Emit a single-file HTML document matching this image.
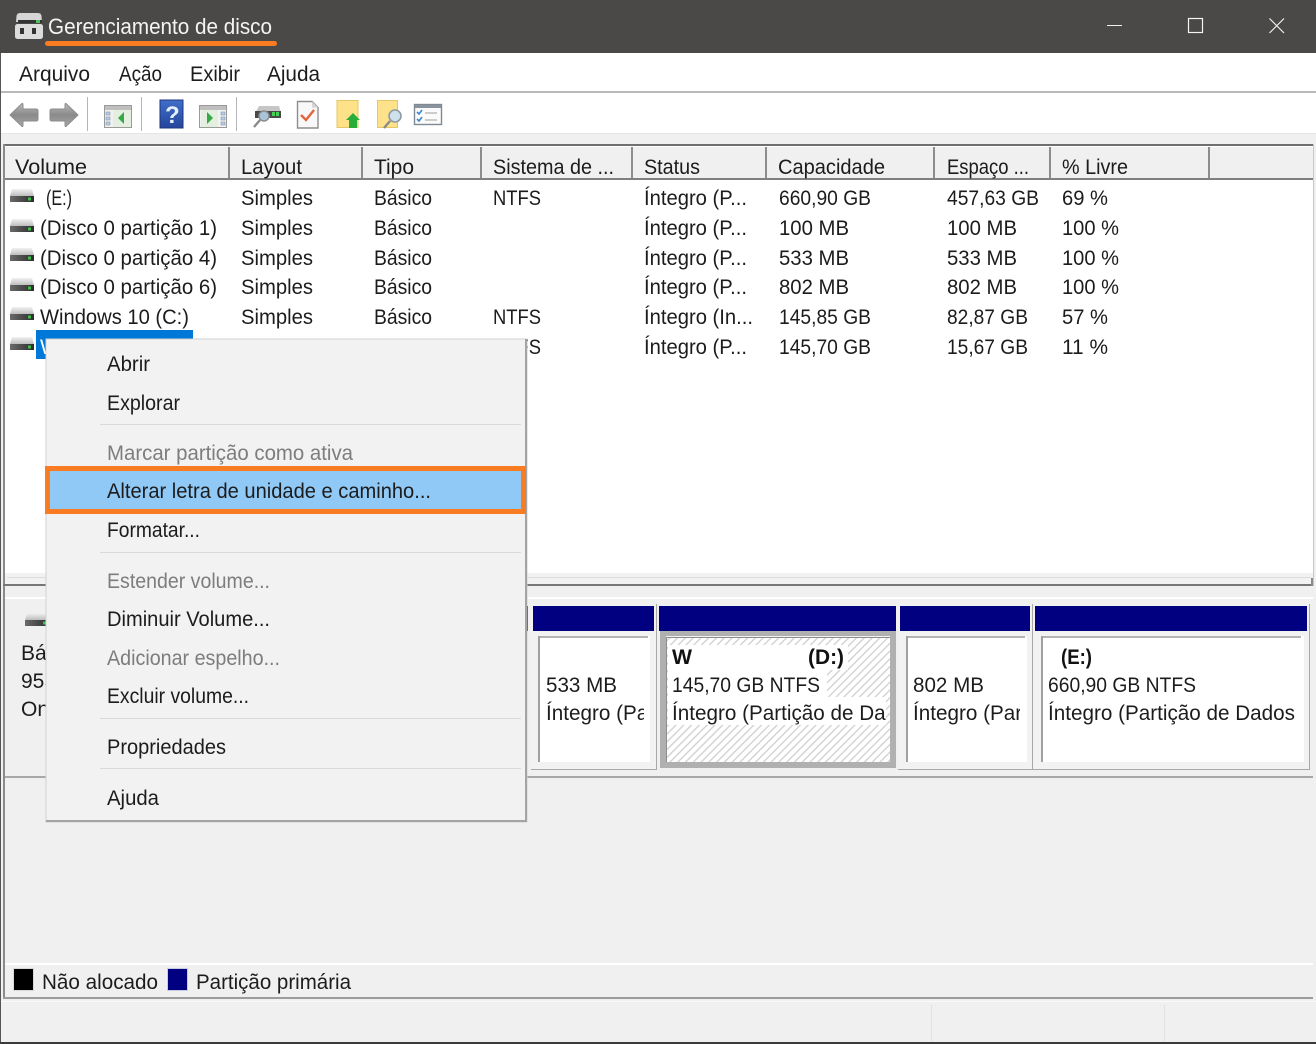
<!DOCTYPE html>
<html lang="pt"><head><meta charset="utf-8"><title>Gerenciamento de disco</title>
<style>
html,body{margin:0;padding:0;background:#f0f0f0}
svg{display:block;filter:blur(.3px)}
text{font-family:"Liberation Sans",sans-serif;font-size:21px;fill:#1c1c1c;white-space:pre}
.d{fill:#7d7d7d}
.b{font-weight:bold;fill:#111}
</style></head><body>
<svg xmlns="http://www.w3.org/2000/svg" width="1316" height="1044" viewBox="0 0 1316 1044">
<defs>
<linearGradient id="gt" x1="0" y1="0" x2="0" y2="1"><stop offset="0" stop-color="#f2f2f2"/><stop offset="1" stop-color="#bdbdbd"/></linearGradient>
<linearGradient id="gd" x1="0" y1="0" x2="1" y2="0"><stop offset="0" stop-color="#6a6a6a"/><stop offset="1" stop-color="#2d2d2d"/></linearGradient>
<linearGradient id="ga" x1="0" y1="0" x2="0" y2="1"><stop offset="0" stop-color="#b8b8b8"/><stop offset=".5" stop-color="#8a8a8a"/><stop offset="1" stop-color="#a8a8a8"/></linearGradient>
<linearGradient id="gh" x1="0" y1="0" x2="0" y2="1"><stop offset="0" stop-color="#3f6fc8"/><stop offset="1" stop-color="#24459c"/></linearGradient>
<pattern id="hatch" width="5.5" height="5.5" patternUnits="userSpaceOnUse" patternTransform="rotate(45)"><rect width="5.5" height="5.5" fill="#fff"/><rect width="1.3" height="5.5" fill="#cfcfcf"/></pattern>
<clipPath id="c1"><rect x="540" y="695" width="104" height="35"/></clipPath>
<clipPath id="c2"><rect x="668" y="695" width="218" height="35"/></clipPath>
<clipPath id="c3"><rect x="908" y="695" width="112" height="35"/></clipPath>
<g id="hd">
<path d="M2 0H22L24 7H0Z" fill="url(#gt)"/>
<rect x="0" y="7" width="24" height="6" fill="url(#gd)"/>
<rect x="18" y="8.500" width="3" height="3" fill="#3cc04a"/>
</g>
<g id="win">
<rect x="0.500" y="0.500" width="27" height="22" fill="#f2f2f2" stroke="#9a9a9a"/>
<rect x="1" y="1" width="26" height="4" fill="#bfbfbf"/>
</g>
<g id="sq" fill="#b9cde4" stroke="#7f93aa" stroke-width=".6">
<rect x="0" y="0" width="4" height="3"/><rect x="0" y="5" width="4" height="3"/><rect x="0" y="10" width="4" height="3"/>
</g>
</defs>

<!-- base -->
<rect width="1316" height="1044" fill="#f0f0f0"/>

<!-- title bar -->
<rect width="1316" height="53" fill="#4a4947"/>
<path d="M20 13H38Q41 13 41.500 16L42 22H16L16.500 16Q17 13 20 13Z" fill="#d6d6d6"/>
<rect x="18" y="20" width="24" height="3" fill="#333"/><rect x="36" y="20" width="4" height="3" fill="#4fc05a"/>
<rect x="15" y="24" width="28" height="15" rx="2.500" fill="#dcdcdc"/>
<rect x="20" y="28" width="4" height="6" fill="#333"/><rect x="32" y="28" width="4" height="6" fill="#333"/>
<text x="48" y="34" textLength="224" lengthAdjust="spacingAndGlyphs" style="fill:#f4f4f4;font-size:22px">Gerenciamento de disco</text>
<rect x="45" y="41" width="232" height="5" rx="2.500" fill="#f97c22"/>
<rect x="1107" y="25" width="15" height="1" fill="#f0f0f0"/>
<rect x="1188.500" y="18.500" width="14" height="14" fill="none" stroke="#f4f4f4" stroke-width="1.200"/>
<path d="M1269.500 18.500L1284 33M1284 18.500L1269.500 33" stroke="#f0f0f0" stroke-width="1.200" fill="none"/>

<!-- menu -->
<rect y="53" width="1316" height="39" fill="#fff"/>
<text x="19" y="81" textLength="71" lengthAdjust="spacingAndGlyphs">Arquivo</text>
<text x="119" y="81" textLength="43" lengthAdjust="spacingAndGlyphs">Ação</text>
<text x="190" y="81" textLength="50" lengthAdjust="spacingAndGlyphs">Exibir</text>
<text x="267" y="81" textLength="53" lengthAdjust="spacingAndGlyphs">Ajuda</text>
<rect y="91" width="1316" height="2" fill="#b9b9b9"/>

<!-- toolbar -->
<rect y="93" width="1316" height="40" fill="#fff"/>
<rect y="133" width="1316" height="1" fill="#e6e6e6"/>
<path d="M10 115L22 103.500Q23 103 23 105V109H36Q38 109 38 111V119Q38 121 36 121H23V125Q23 127 22 126.500Z" fill="url(#ga)" stroke="#8c8c8c"/>
<path d="M78 115L66 103.500Q65 103 65 105V109H52Q50 109 50 111V119Q50 121 52 121H65V125Q65 127 66 126.500Z" fill="url(#ga)" stroke="#8c8c8c"/>
<rect x="87" y="97" width="1" height="34" fill="#b5b5b5"/>
<rect x="141" y="97" width="1" height="34" fill="#b5b5b5"/>
<rect x="236" y="97" width="1" height="34" fill="#b5b5b5"/>
<use href="#win" x="104" y="105"/>
<use href="#sq" x="106" y="112"/>
<rect x="113" y="110" width="18" height="17" fill="#e4efe0"/>
<path d="M124 112V124L118 118Z" fill="#35a84a"/>
<rect x="160" y="100" width="23" height="28" fill="url(#gh)" stroke="#1f357f"/>
<text x="165" y="123" style="fill:#e6eefb;font-size:24px;font-weight:bold">?</text>
<use href="#win" x="199" y="105"/>
<use href="#sq" x="221" y="112"/>
<rect x="201" y="110" width="17" height="17" fill="#e4efe0"/>
<path d="M207 112V124L213 118Z" fill="#35a84a"/>
<!-- disk + magnifier -->
<path d="M259 106H279L281 113H255Z" fill="#c6c6c6"/>
<rect x="255" y="111" width="26" height="7" fill="#4a4a4a"/>
<rect x="272" y="112" width="3" height="4" fill="#44d050"/><rect x="276" y="112" width="3" height="4" fill="#44d050"/>
<circle cx="264" cy="116" r="5" fill="#a9c5dc" stroke="#8a8a8a" stroke-width="1.400"/>
<path d="M260 120L254 127" stroke="#8a8a8a" stroke-width="2.400"/>
<!-- doc check -->
<path d="M297.500 101.500H312L318 107.500V128H297.500Z" fill="#f8f8f8" stroke="#8e8e8e" stroke-width="1.400"/>
<path d="M312 101.500V107.500H318Z" fill="#d4d4d4"/>
<path d="M301 115L306 120L314 110" fill="none" stroke="#e2643a" stroke-width="2.400"/>
<!-- folder up -->
<rect x="337" y="100.500" width="21" height="27" fill="#fde28a" stroke="#e6c766"/>
<path d="M353 113L360 120H357V128H349V120H346Z" fill="#27ae38"/>
<!-- folder search -->
<rect x="377.500" y="100.500" width="20" height="27" fill="#fde28a" stroke="#e6c766"/>
<circle cx="395" cy="116" r="6" fill="#cfe1ec" stroke="#8f9aa0" stroke-width="1.600"/>
<path d="M390 121L384 128" stroke="#8a8a8a" stroke-width="2.400"/>
<!-- checklist -->
<rect x="414.500" y="104.500" width="27" height="20" fill="#fbfbfb" stroke="#808a94" stroke-width="1.400"/>
<rect x="415" y="105" width="26" height="3" fill="#8a949e"/>
<path d="M417 112L419 114L422 110M417 119L419 121L422 117" fill="none" stroke="#3a88d8" stroke-width="1.600"/>
<path d="M425 113H437M425 120H437" stroke="#bdbdbd" stroke-width="1.600"/>

<!-- list view -->
<rect x="3" y="144" width="1310" height="2" fill="#6f6f6f"/>
<rect x="5" y="146" width="1308" height="1" fill="#fff"/>
<rect x="5" y="147" width="1308" height="31" fill="#f0f0f0"/>
<rect x="3" y="178" width="1310" height="2" fill="#808080"/>
<rect x="5" y="180" width="1308" height="393" fill="#fff"/>
<rect x="3" y="144" width="2" height="442" fill="#8a8a8a"/>
<rect x="1313" y="144" width="1" height="442" fill="#c8c8c8"/>
<g fill="#8d8d8d">
<rect x="228" y="147" width="2" height="31"/><rect x="361" y="147" width="2" height="31"/><rect x="480" y="147" width="2" height="31"/><rect x="631" y="147" width="2" height="31"/><rect x="765" y="147" width="2" height="31"/><rect x="933" y="147" width="2" height="31"/><rect x="1049" y="147" width="2" height="31"/><rect x="1208" y="147" width="2" height="31"/>
</g>
<text x="15" y="174" textLength="72" lengthAdjust="spacingAndGlyphs">Volume</text>
<text x="241" y="174" textLength="61" lengthAdjust="spacingAndGlyphs">Layout</text>
<text x="374" y="174" textLength="40" lengthAdjust="spacingAndGlyphs">Tipo</text>
<text x="493" y="174" textLength="121" lengthAdjust="spacingAndGlyphs">Sistema de ...</text>
<text x="644" y="174" textLength="56" lengthAdjust="spacingAndGlyphs">Status</text>
<text x="778" y="174" textLength="107" lengthAdjust="spacingAndGlyphs">Capacidade</text>
<text x="947" y="174" textLength="82" lengthAdjust="spacingAndGlyphs">Espaço ...</text>
<text x="1062" y="174" textLength="66" lengthAdjust="spacingAndGlyphs">% Livre</text>

<use href="#hd" x="10" y="189"/><use href="#hd" x="10" y="219"/><use href="#hd" x="10" y="248"/><use href="#hd" x="10" y="278"/><use href="#hd" x="10" y="307"/><use href="#hd" x="10" y="337"/>

<!-- rows -->
<text x="46" y="205" textLength="26" lengthAdjust="spacingAndGlyphs">(E:)</text>
<text x="241" y="205" textLength="72" lengthAdjust="spacingAndGlyphs">Simples</text><text x="374" y="205" textLength="58" lengthAdjust="spacingAndGlyphs">Básico</text><text x="493" y="205" textLength="48" lengthAdjust="spacingAndGlyphs">NTFS</text><text x="644" y="205" textLength="103" lengthAdjust="spacingAndGlyphs">Íntegro (P...</text><text x="779" y="205" textLength="92" lengthAdjust="spacingAndGlyphs">660,90 GB</text><text x="947" y="205" textLength="92" lengthAdjust="spacingAndGlyphs">457,63 GB</text><text x="1062" y="205" textLength="46" lengthAdjust="spacingAndGlyphs">69 %</text>

<text x="40" y="235" textLength="177" lengthAdjust="spacingAndGlyphs">(Disco 0 partição 1)</text>
<text x="241" y="235" textLength="72" lengthAdjust="spacingAndGlyphs">Simples</text><text x="374" y="235" textLength="58" lengthAdjust="spacingAndGlyphs">Básico</text><text x="644" y="235" textLength="103" lengthAdjust="spacingAndGlyphs">Íntegro (P...</text><text x="779" y="235" textLength="70" lengthAdjust="spacingAndGlyphs">100 MB</text><text x="947" y="235" textLength="70" lengthAdjust="spacingAndGlyphs">100 MB</text><text x="1062" y="235" textLength="57" lengthAdjust="spacingAndGlyphs">100 %</text>

<text x="40" y="265" textLength="177" lengthAdjust="spacingAndGlyphs">(Disco 0 partição 4)</text>
<text x="241" y="265" textLength="72" lengthAdjust="spacingAndGlyphs">Simples</text><text x="374" y="265" textLength="58" lengthAdjust="spacingAndGlyphs">Básico</text><text x="644" y="265" textLength="103" lengthAdjust="spacingAndGlyphs">Íntegro (P...</text><text x="779" y="265" textLength="70" lengthAdjust="spacingAndGlyphs">533 MB</text><text x="947" y="265" textLength="70" lengthAdjust="spacingAndGlyphs">533 MB</text><text x="1062" y="265" textLength="57" lengthAdjust="spacingAndGlyphs">100 %</text>

<text x="40" y="294" textLength="177" lengthAdjust="spacingAndGlyphs">(Disco 0 partição 6)</text>
<text x="241" y="294" textLength="72" lengthAdjust="spacingAndGlyphs">Simples</text><text x="374" y="294" textLength="58" lengthAdjust="spacingAndGlyphs">Básico</text><text x="644" y="294" textLength="103" lengthAdjust="spacingAndGlyphs">Íntegro (P...</text><text x="779" y="294" textLength="70" lengthAdjust="spacingAndGlyphs">802 MB</text><text x="947" y="294" textLength="70" lengthAdjust="spacingAndGlyphs">802 MB</text><text x="1062" y="294" textLength="57" lengthAdjust="spacingAndGlyphs">100 %</text>

<text x="40" y="324" textLength="149" lengthAdjust="spacingAndGlyphs">Windows 10 (C:)</text>
<text x="241" y="324" textLength="72" lengthAdjust="spacingAndGlyphs">Simples</text><text x="374" y="324" textLength="58" lengthAdjust="spacingAndGlyphs">Básico</text><text x="493" y="324" textLength="48" lengthAdjust="spacingAndGlyphs">NTFS</text><text x="644" y="324" textLength="109" lengthAdjust="spacingAndGlyphs">Íntegro (In...</text><text x="779" y="324" textLength="92" lengthAdjust="spacingAndGlyphs">145,85 GB</text><text x="947" y="324" textLength="81" lengthAdjust="spacingAndGlyphs">82,87 GB</text><text x="1062" y="324" textLength="46" lengthAdjust="spacingAndGlyphs">57 %</text>

<rect x="36" y="330" width="157" height="29" fill="#0078d7"/>
<text x="40" y="354" style="fill:#fff">W</text>
<text x="493" y="354" textLength="48" lengthAdjust="spacingAndGlyphs">NTFS</text><text x="644" y="354" textLength="103" lengthAdjust="spacingAndGlyphs">Íntegro (P...</text><text x="779" y="354" textLength="92" lengthAdjust="spacingAndGlyphs">145,70 GB</text><text x="947" y="354" textLength="81" lengthAdjust="spacingAndGlyphs">15,67 GB</text><text x="1062" y="354" textLength="46" lengthAdjust="spacingAndGlyphs">11 %</text>

<!-- scrollbar strip / splitter -->
<rect x="5" y="573" width="1308" height="11" fill="#f2f2f2"/>
<rect x="7" y="577" width="1304" height="1" fill="#dcdcdc"/>
<rect x="3" y="584" width="1310" height="2" fill="#777"/>
<rect x="1311" y="578" width="2" height="8" fill="#8a8a8a"/>
<rect x="3" y="597" width="1310" height="2" fill="#fff"/>

<!-- disk pane -->
<rect x="3" y="586" width="2" height="412" fill="#8a8a8a"/>
<rect x="5" y="776" width="1308" height="2" fill="#a8a8a8"/>
<use href="#hd" x="25" y="613"/>
<text x="21" y="660">Básico</text>
<text x="21" y="688">953,</text>
<text x="21" y="716">Online</text>

<!-- previous block fragment -->
<rect x="500" y="606" width="28" height="25" fill="#000080"/>

<!-- 533 -->
<rect x="531" y="604" width="126" height="166" fill="#a8a8a8"/>
<rect x="531" y="604" width="125" height="165" fill="#f2f2f2"/>
<rect x="533" y="606" width="121" height="25" fill="#000080"/>
<rect x="538" y="636" width="112" height="126" fill="#fff"/>
<rect x="538" y="636" width="110" height="2" fill="#b4b4b4"/><rect x="538" y="636" width="2" height="126" fill="#a0a0a0"/>
<text x="546" y="692" textLength="71" lengthAdjust="spacingAndGlyphs">533 MB</text>
<text x="546" y="720" textLength="247" lengthAdjust="spacingAndGlyphs" clip-path="url(#c1)">Íntegro (Partição de Dados</text>

<!-- D selected -->
<rect x="659" y="606" width="237" height="25" fill="#000080"/>
<rect x="660" y="631" width="235" height="5" fill="#b0b0b0"/>
<rect x="660" y="631" width="6" height="137" fill="#b0b0b0"/>
<rect x="890" y="631" width="6" height="137" fill="#b0b0b0"/>
<rect x="660" y="762" width="236" height="6" fill="#b0b0b0"/>
<rect x="666" y="637" width="224" height="125" fill="url(#hatch)"/>
<rect x="666" y="637" width="224" height="1" fill="#8e8e8e"/><rect x="666" y="637" width="1" height="125" fill="#8e8e8e"/>
<rect x="668" y="645" width="180" height="25" fill="#fff"/>
<rect x="668" y="670" width="159" height="27" fill="#fff"/>
<rect x="668" y="697" width="218" height="28" fill="#fff"/>
<text x="672" y="664" class="b" textLength="20" lengthAdjust="spacingAndGlyphs">W</text>
<text x="808" y="664" class="b" textLength="36" lengthAdjust="spacingAndGlyphs">(D:)</text>
<text x="672" y="692" textLength="148" lengthAdjust="spacingAndGlyphs">145,70 GB NTFS</text>
<text x="672" y="720" textLength="247" lengthAdjust="spacingAndGlyphs" clip-path="url(#c2)">Íntegro (Partição de Dados</text>

<!-- 802 -->
<rect x="898" y="604" width="135" height="166" fill="#a8a8a8"/>
<rect x="898" y="604" width="134" height="165" fill="#f2f2f2"/>
<rect x="900" y="606" width="130" height="25" fill="#000080"/>
<rect x="906" y="636" width="121" height="126" fill="#fff"/>
<rect x="906" y="636" width="119" height="2" fill="#b4b4b4"/><rect x="906" y="636" width="2" height="126" fill="#a0a0a0"/>
<text x="913" y="692" textLength="71" lengthAdjust="spacingAndGlyphs">802 MB</text>
<text x="913" y="720" textLength="247" lengthAdjust="spacingAndGlyphs" clip-path="url(#c3)">Íntegro (Partição de Dados</text>

<!-- E -->
<rect x="1033" y="604" width="277" height="166" fill="#a8a8a8"/>
<rect x="1033" y="604" width="276" height="165" fill="#f2f2f2"/>
<rect x="1035" y="606" width="272" height="25" fill="#000080"/>
<rect x="1041" y="636" width="263" height="126" fill="#fff"/>
<rect x="1041" y="636" width="260" height="2" fill="#b4b4b4"/><rect x="1041" y="636" width="2" height="126" fill="#a0a0a0"/>
<text x="1061" y="664" class="b" textLength="31" lengthAdjust="spacingAndGlyphs">(E:)</text>
<text x="1048" y="692" textLength="148" lengthAdjust="spacingAndGlyphs">660,90 GB NTFS</text>
<text x="1048" y="720" textLength="247" lengthAdjust="spacingAndGlyphs">Íntegro (Partição de Dados</text>

<!-- legend -->
<rect x="5" y="963" width="1308" height="2" fill="#fff"/>
<rect x="13" y="968" width="21" height="23" fill="#d8d8d8"/>
<rect x="14" y="969" width="19" height="21" fill="#000"/>
<text x="42" y="989" textLength="116" lengthAdjust="spacingAndGlyphs">Não alocado</text>
<rect x="167" y="968" width="21" height="23" fill="#c8cce0"/>
<rect x="168" y="969" width="19" height="21" fill="#000080"/>
<text x="196" y="989" textLength="155" lengthAdjust="spacingAndGlyphs">Partição primária</text>
<rect x="3" y="997" width="1310" height="2" fill="#9c9c9c"/>
<rect x="0" y="1001" width="1316" height="1" fill="#fafafa"/>
<rect x="931" y="1005" width="1" height="37" fill="#e2e2e2"/>
<rect x="1164" y="1005" width="1" height="37" fill="#e2e2e2"/>

<!-- window edges -->
<rect x="0" y="53" width="1" height="991" fill="#555"/>
<rect x="0" y="1042" width="1316" height="2" fill="#3a3a3a"/>

<!-- context menu -->
<rect x="46" y="339" width="481" height="483" fill="#f2f2f2" stroke="#d2d2d2" stroke-width="1"/>
<rect x="525" y="339" width="2" height="483" fill="#a4a4a4"/>
<rect x="46" y="820" width="481" height="2" fill="#a4a4a4"/>
<g fill="#d9d9d9">
<rect x="100" y="424" width="421" height="1"/><rect x="100" y="552" width="421" height="1"/><rect x="100" y="718" width="421" height="1"/><rect x="100" y="768" width="421" height="1"/>
</g>
<rect x="45" y="466" width="481" height="48" fill="#f97c22"/>
<rect x="50" y="471" width="471" height="38" fill="#90c8f6"/>
<text x="107" y="371" textLength="43" lengthAdjust="spacingAndGlyphs">Abrir</text>
<text x="107" y="410" textLength="73" lengthAdjust="spacingAndGlyphs">Explorar</text>
<text x="107" y="460" class="d" textLength="246" lengthAdjust="spacingAndGlyphs">Marcar partição como ativa</text>
<text x="107" y="498" textLength="324" lengthAdjust="spacingAndGlyphs">Alterar letra de unidade e caminho...</text>
<text x="107" y="537" textLength="93" lengthAdjust="spacingAndGlyphs">Formatar...</text>
<text x="107" y="588" class="d" textLength="163" lengthAdjust="spacingAndGlyphs">Estender volume...</text>
<text x="107" y="626" textLength="163" lengthAdjust="spacingAndGlyphs">Diminuir Volume...</text>
<text x="107" y="665" class="d" textLength="173" lengthAdjust="spacingAndGlyphs">Adicionar espelho...</text>
<text x="107" y="703" textLength="142" lengthAdjust="spacingAndGlyphs">Excluir volume...</text>
<text x="107" y="754" textLength="119" lengthAdjust="spacingAndGlyphs">Propriedades</text>
<text x="107" y="805" textLength="52" lengthAdjust="spacingAndGlyphs">Ajuda</text>
</svg>
</body></html>
